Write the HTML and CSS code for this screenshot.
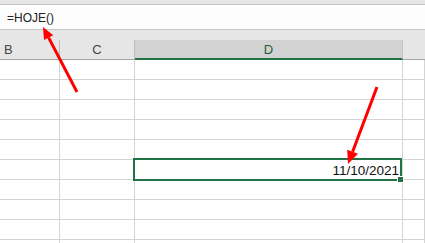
FILE: index.html
```html
<!DOCTYPE html>
<html lang="pt">
<head>
    <meta charset="UTF-8">
    <title>HOJE</title>
    <link rel="stylesheet" href="styles.css">
</head>
<body>
    <div class="sheet">
        <div class="top-strip"></div>
        <div class="formula-bar">=HOJE()</div>
        <div class="gap"></div>

        <div class="grid">
            <div class="hd hd-b">B</div>
            <div class="hd">C</div>
            <div class="hd hd-active">D</div>
            <div class="hd hd-last"></div>

            <div class="cell"></div><div class="cell"></div><div class="cell"></div><div class="cell"></div>
            <div class="cell"></div><div class="cell"></div><div class="cell"></div><div class="cell"></div>
            <div class="cell"></div><div class="cell"></div><div class="cell"></div><div class="cell"></div>
            <div class="cell"></div><div class="cell"></div><div class="cell"></div><div class="cell"></div>
            <div class="cell"></div><div class="cell"></div><div class="cell"></div><div class="cell"></div>
            <div class="cell"></div><div class="cell"></div>
            <div class="cell cell-date">
                11/10/2021
                <div class="selection"><span class="handle"></span></div>
            </div>
            <div class="cell"></div>
            <div class="cell"></div><div class="cell"></div><div class="cell"></div><div class="cell"></div>
            <div class="cell"></div><div class="cell"></div><div class="cell"></div><div class="cell"></div>
            <div class="cell"></div><div class="cell"></div><div class="cell"></div><div class="cell"></div>
            <div class="cell"></div><div class="cell"></div><div class="cell"></div><div class="cell"></div>
        </div>

        <!-- annotation arrows drawn over the screenshot -->
        <svg class="arrows" width="425" height="243" viewBox="0 0 425 243">
            <line x1="77" y1="92" x2="48.6" y2="37.6" stroke="#f00" stroke-width="3"/>
            <polygon points="43,27 53.2,35.3 44,40" fill="#f00"/>
            <line x1="377" y1="87" x2="352.6" y2="151.8" stroke="#f00" stroke-width="3"/>
            <polygon points="348,164 358,153.8 347.2,149.8" fill="#f00"/>
        </svg>
    </div>
</body>
</html>
```

FILE: styles.css
```css
* {
    margin: 0;
    padding: 0;
    box-sizing: border-box;
}

body {
    font-family: 'Liberation Sans', Arial, sans-serif;
    background: #fff;
    overflow: hidden;
}

.sheet {
    position: relative;
    width: 425px;
    height: 243px;
    overflow: hidden;
}

.top-strip {
    height: 5px;
    background: #e6e6e6;
    border-bottom: 1px solid #c6c6c6;
}

.formula-bar {
    height: 25px;
    background: #fdfdfd;
    border-bottom: 1px solid #c6c6c6;
    padding-left: 7px;
    font-size: 12px;
    line-height: 24px;
    padding-top: 1px;
    color: #222;
}

.gap {
    height: 10px;
    background: #e6e6e6;
}

.grid {
    display: grid;
    grid-template-columns: 60px 75px 268px 1fr;
    grid-auto-rows: 20px;
}

.hd {
    background: #e6e6e6;
    border-right: 1px solid #bdbdbd;
    border-bottom: 1px solid #a6a6a6;
    font-size: 13px;
    line-height: 19px;
    color: #444;
    text-align: center;
}

.hd-b {
    text-align: left;
    padding-left: 4px;
}

.hd-active {
    background: #d2d2d2;
    color: #1f5e3a;
    border-bottom: 2px solid #217346;
    border-right-color: #c4c4c4;
}

.hd-last {
    border-right: none;
}

.cell {
    border-right: 1px solid #d4d4d4;
    border-bottom: 1px solid #d4d4d4;
    font-size: 13px;
    color: #111;
}

.cell-date {
    position: relative;
    text-align: right;
    padding-right: 3px;
    padding-top: 1px;
    font-size: 13.5px;
    line-height: 19px;
}

.selection {
    position: absolute;
    left: -2px;
    top: -2px;
    right: 0;
    bottom: -2px;
    border: 2px solid #217346;
}

.handle {
    position: absolute;
    right: -3px;
    bottom: -3px;
    width: 5px;
    height: 5px;
    background: #217346;
    box-shadow: 0 0 0 1px #fff;
}

.arrows {
    position: absolute;
    left: 0;
    top: 0;
}
```
